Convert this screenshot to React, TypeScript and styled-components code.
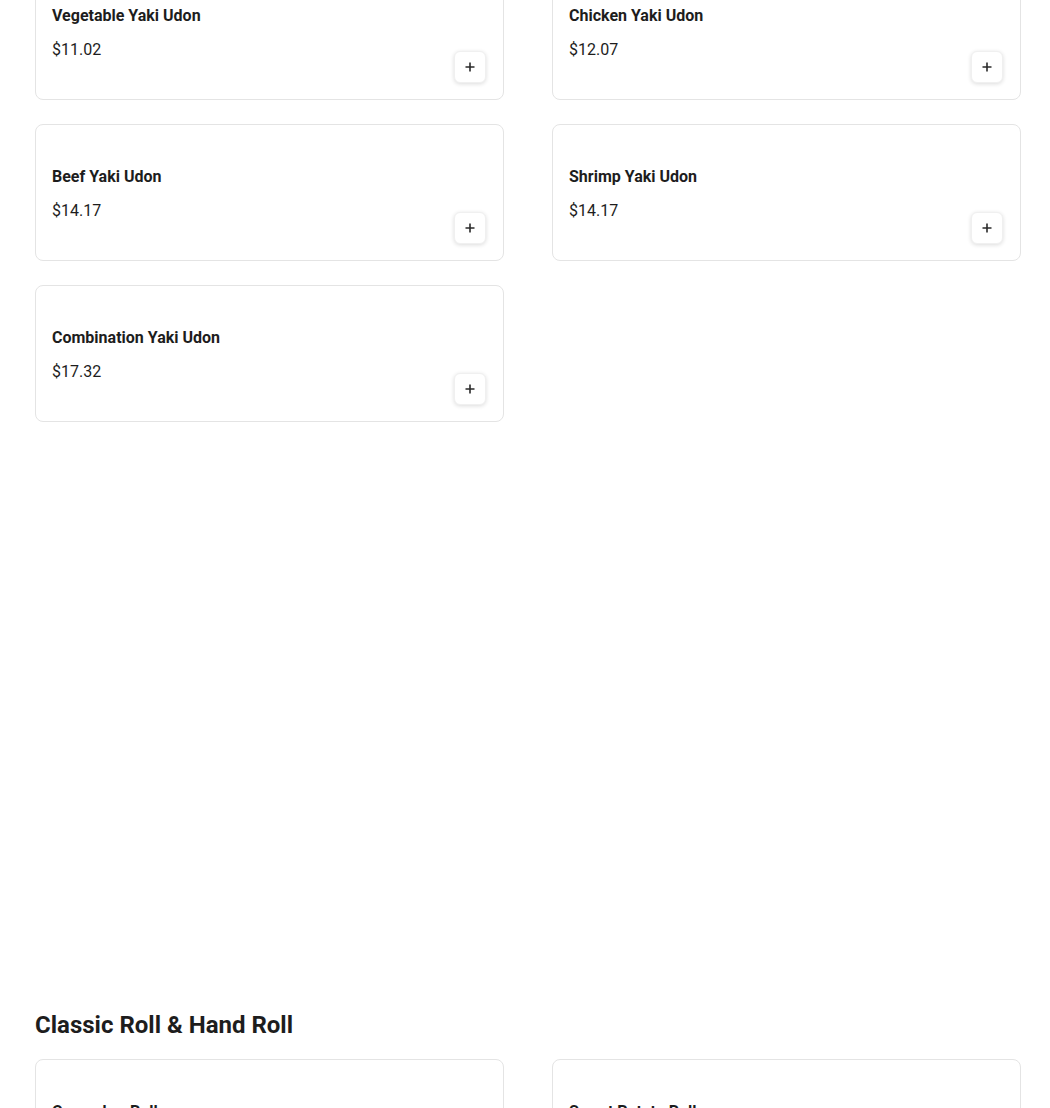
import React from "react";
import styled, { createGlobalStyle } from "styled-components";

const GlobalStyle = createGlobalStyle`
  html, body {
    margin: 0;
    padding: 0;
    background: #ffffff;
    font-family: Roboto, "Liberation Sans", Arial, sans-serif;
    color: #1d1d1d;
    overflow: hidden;
  }
`;

interface Item {
  name: string;
  price: string;
}

interface MenuSection {
  title?: string;
  items: Item[];
}

const sections: MenuSection[] = [
  {
    items: [
      { name: "Vegetable Yaki Udon", price: "$11.02" },
      { name: "Chicken Yaki Udon", price: "$12.07" },
      { name: "Beef Yaki Udon", price: "$14.17" },
      { name: "Shrimp Yaki Udon", price: "$14.17" },
      { name: "Combination Yaki Udon", price: "$17.32" },
    ],
  },
  {
    title: "Classic Roll & Hand Roll",
    items: [
      { name: "Cucumber Roll", price: "$6.30" },
      { name: "Sweet Potato Roll", price: "$7.35" },
    ],
  },
];

const Page = styled.div`
  padding: 0 35px;
  margin-top: -37px;
`;

const Section = styled.section<{ $gapAfter?: number }>`
  padding-bottom: ${(p) => p.$gapAfter ?? 0}px;
`;

const SectionTitle = styled.h2`
  margin: 0 0 20px;
  font-size: 24px;
  line-height: 28px;
  font-weight: 700;
  color: #1d1d1d;
`;

const Grid = styled.div`
  display: grid;
  grid-template-columns: repeat(2, 469px);
  column-gap: 48px;
  row-gap: 24px;
`;

const Card = styled.div`
  box-sizing: border-box;
  height: 137px;
  border: 1px solid #e4e4e4;
  border-radius: 8px;
  background: #fff;
  padding: 16px 17px 16px 16px;
  display: flex;
  justify-content: space-between;
  align-items: flex-end;
`;

const Info = styled.div`
  align-self: flex-start;
  margin-top: 26px;
  display: flex;
  flex-direction: column;
  gap: 13px;
`;

const Name = styled.div`
  font-size: 16px;
  line-height: 20px;
  font-weight: 700;
  color: #1d1d1d;
`;

const Price = styled.div`
  font-size: 16px;
  line-height: 22px;
  color: #1d1d1d;
`;

const AddButton = styled.button`
  width: 32px;
  height: 32px;
  padding: 0;
  border: 1px solid #f0f0f0;
  border-radius: 6px;
  background: #fff;
  box-shadow: 0 1px 4px rgba(0, 0, 0, 0.14);
  display: flex;
  align-items: center;
  justify-content: center;
  cursor: pointer;
`;

const PlusIcon = () => (
  <svg width="12" height="12" viewBox="0 0 12 12" fill="none">
    <path d="M6 1.5v9M1.5 6h9" stroke="#2a2a2a" strokeWidth="1.6" />
  </svg>
);

const App: React.FC = () => {
  return (
    <>
      <GlobalStyle />
      <Page>
        {sections.map((section, i) => (
          <Section key={i} $gapAfter={i === 0 ? 589 : 0}>
            {section.title && <SectionTitle>{section.title}</SectionTitle>}
            <Grid>
              {section.items.map((item) => (
                <Card key={item.name}>
                  <Info>
                    <Name>{item.name}</Name>
                    <Price>{item.price}</Price>
                  </Info>
                  <AddButton aria-label={`Add ${item.name}`}>
                    <PlusIcon />
                  </AddButton>
                </Card>
              ))}
            </Grid>
          </Section>
        ))}
      </Page>
    </>
  );
};

export default App;
